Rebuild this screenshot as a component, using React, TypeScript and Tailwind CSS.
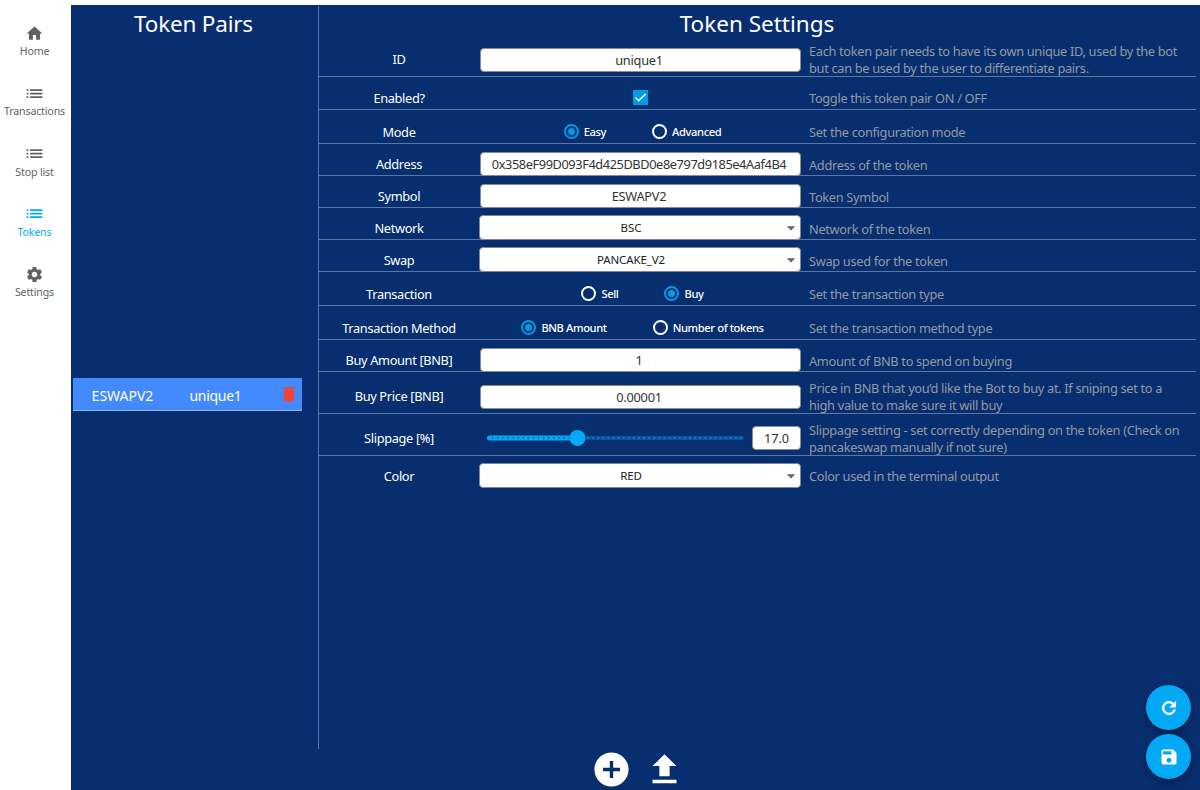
import { useState, type ReactNode } from 'react';
import { clsx } from 'clsx';
import { MdAddCircle, MdArrowDropDown, MdDelete, MdHome, MdList, MdSave, MdSettings, MdUpload } from 'react-icons/md';

const navItems = [
  { label: 'Home', icon: <MdHome size={19} /> },
  { label: 'Transactions', icon: <MdList size={21} /> },
  { label: 'Stop list', icon: <MdList size={21} /> },
  { label: 'Tokens', icon: <MdList size={21} /> },
  { label: 'Settings', icon: <MdSettings size={19} /> },
];

function TextField({ value, className }: { value: string; className?: string }) {
  return (
    <input
      defaultValue={value}
      className={clsx(
        'h-6 rounded-[4px] border border-[#8c8c8c] bg-white text-center text-[12.8px] text-[#333] outline-none',
        className ?? 'w-[321px] pr-[2px] tracking-[-0.25px]',
      )}
    />
  );
}

function SelectField({ value }: { value: string }) {
  return (
    <button className="flex h-[25px] w-[322px] items-center rounded-[4px] border border-[#7d8799] bg-white text-[11.5px] tracking-[-0.1px] text-[#222]">
      <span className="flex-1 pt-px pl-px text-center">{value}</span>
      <MdArrowDropDown size={20} className="-mr-px text-[#666]" />
    </button>
  );
}

function Radio({ label, checked, onClick }: { label: string; checked: boolean; onClick: () => void }) {
  return (
    <button
      onClick={onClick}
      className="flex items-center gap-[5px] text-[11.2px] font-medium tracking-[-0.4px] text-white"
    >
      <span
        className={clsx(
          'flex h-[15px] w-[15px] items-center justify-center rounded-full border-2',
          checked ? 'border-[#039be5]' : 'border-white',
        )}
      >
        {checked && <span className="h-[7px] w-[7px] rounded-full bg-[#039be5]" />}
      </span>
      <span className="pt-px">{label}</span>
    </button>
  );
}

function RadioGroup({ options, initial }: { options: string[]; initial: string }) {
  const [selected, setSelected] = useState(initial);

  return (
    <div className="flex gap-[46px] pl-[5px]">
      {options.map((option) => (
        <Radio key={option} label={option} checked={selected === option} onClick={() => setSelected(option)} />
      ))}
    </div>
  );
}

function Slider({ value }: { value: number }) {
  return (
    <svg width="258" height="16" viewBox="0 0 258 16">
      <rect x="0" y="6" width="257" height="4" rx="2" fill="#06539b" />
      <rect x="0" y="5.5" width="91" height="5" rx="2.5" fill="#03a9f4" />
      <path d="M5 8H88" stroke="#06437f" strokeWidth="1.4" strokeDasharray="1.4 3.7" />
      <path d="M100 8H257" stroke="#038bd0" strokeWidth="1.5" strokeDasharray="2 3.1" />
      <circle cx={value * 5.32} cy="8" r="8" fill="#03a9f4" />
    </svg>
  );
}

interface RowProps {
  label: string;
  help: string;
  height: string;
  offset?: string;
  textOffset?: string;
  last?: boolean;
  children: ReactNode;
}

function Row({ label, help, height, offset = 'pt-2', textOffset = 'pt-[11px]', last, children }: RowProps) {
  return (
    <div className={clsx('flex', height, !last && 'border-b border-[#5b76a3]')}>
      <div
        className={clsx(
          'flex w-[160px] shrink-0 items-center justify-center text-[12.8px] tracking-[-0.35px] text-white',
          textOffset,
        )}
      >
        {label}
      </div>
      <div className={clsx('flex w-[322px] shrink-0 items-center justify-center', offset)}>{children}</div>
      <div
        className={clsx(
          'flex flex-1 items-center pl-2 text-[12.8px] leading-[17px] tracking-[-0.32px] text-[#9499a0]',
          textOffset,
        )}
      >
        <span className="whitespace-pre">{help}</span>
      </div>
    </div>
  );
}

export default function App() {
  const [active, setActive] = useState('Tokens');

  return (
    <div className="flex h-[790px] w-[1200px] overflow-hidden bg-white font-['Noto_Sans','Open_Sans',sans-serif]">
      <nav className="flex w-[71px] shrink-0 flex-col pt-[11px]">
        {navItems.map(({ label, icon }) => (
          <button
            key={label}
            onClick={() => setActive(label)}
            className={clsx(
              'flex h-[60.3px] w-[69px] flex-col items-center pt-3 text-[10.6px] tracking-[-0.15px]',
              label === active ? 'text-[#03a9f4]' : 'text-[#616161]',
            )}
          >
            <span className="flex h-5 items-center">{icon}</span>
            <span className="pt-px leading-[15px]">{label}</span>
          </button>
        ))}
      </nav>

      <main className="relative mt-[5px] flex flex-1 flex-col bg-[#072e6f]">
        <div className="flex h-[745px] pt-px">
          <section className="flex w-[248px] shrink-0 flex-col border-r border-[#5b76a3]">
            <h1 className="h-[36px] pr-[2px] text-center text-[22.5px] leading-[36px] tracking-[-0.2px] text-white">
              Token Pairs
            </h1>
            <div className="mt-[336px] ml-[2px] flex h-[33px] w-[229px] items-center border-b border-[#8fb3f2] bg-[#448aff] text-[14px] text-white">
              <span className="w-[99px] pt-[2px] text-center">ESWAPV2</span>
              <span className="w-[87px] pt-[2px] text-center tracking-[-0.3px]">unique1</span>
              <MdDelete size={20} className="ml-5 text-[#f44336]" />
            </div>
          </section>

          <section className="w-[877px] shrink-0">
            <h1 className="h-[37px] pr-px text-center text-[22.5px] leading-[36px] text-white">Token Settings</h1>
            <Row
              label="ID"
              help={'Each token pair needs to have its own unique ID, used by the bot\nbut can be used by the user to differentiate pairs.'}
              height="h-[34px]"
              offset="pt-0"
              textOffset="pt-px"
            >
              <TextField value="unique1" />
            </Row>
            <Row label="Enabled?" help="Toggle this token pair ON / OFF" height="h-[33px]">
              <span className="flex h-[15px] w-[15px] items-center justify-center bg-[#039be5]">
                <svg width="13" height="11" viewBox="0 0 13 11" fill="none">
                  <path d="M1.5 5.5L4.8 8.7L11.5 2" stroke="white" strokeWidth="1.6" />
                </svg>
              </span>
            </Row>
            <Row
              label="Mode"
              help="Set the configuration mode"
              height="h-[34px]"
              offset="pt-[10px]"
              textOffset="pt-[12px]"
            >
              <RadioGroup options={['Easy', 'Advanced']} initial="Easy" />
            </Row>
            <Row label="Address" help="Address of the token" height="h-[32px]">
              <TextField
                value="0x358eF99D093F4d425DBD0e8e797d9185e4Aaf4B4"
                className="w-[321px] pr-[2px] tracking-[-0.42px]"
              />
            </Row>
            <Row label="Symbol" help="Token Symbol" height="h-[32px]">
              <TextField value="ESWAPV2" />
            </Row>
            <Row label="Network" help="Network of the token" height="h-[32px]">
              <SelectField value="BSC" />
            </Row>
            <Row label="Swap" help="Swap used for the token" height="h-[32px]">
              <SelectField value="PANCAKE_V2" />
            </Row>
            <Row
              label="Transaction"
              help="Set the transaction type"
              height="h-[34px]"
              offset="pt-[10px]"
              textOffset="pt-[12px]"
            >
              <RadioGroup options={['Sell', 'Buy']} initial="Buy" />
            </Row>
            <Row
              label="Transaction Method"
              help="Set the transaction method type"
              height="h-[34px]"
              offset="pt-[10px]"
              textOffset="pt-[12px]"
            >
              <RadioGroup options={['BNB Amount', 'Number of tokens']} initial="BNB Amount" />
            </Row>
            <Row label="Buy Amount [BNB]" help="Amount of BNB to spend on buying" height="h-[32px]">
              <TextField value="1" />
            </Row>
            <Row
              label="Buy Price [BNB]"
              help={'Price in BNB that you’d like the Bot to buy at. If sniping set to a\nhigh value to make sure it will buy'}
              height="h-[42px]"
              textOffset="pt-[9px]"
            >
              <TextField value="0.00001" />
            </Row>
            <Row
              label="Slippage [%]"
              help={'Slippage setting - set correctly depending on the token (Check on\npancakeswap manually if not sure)'}
              height="h-[42px]"
              offset="pt-[7px]"
              textOffset="pt-[9px]"
            >
              <div className="flex items-center gap-[7px] pl-[8px]">
                <Slider value={17} />
                <TextField value="17.0" className="w-[49px] tracking-[-0.1px]" />
              </div>
            </Row>
            <Row label="Color" help="Color used in the terminal output" height="h-[32px]" offset="pt-[7px]" textOffset="pt-[9px]" last>
              <SelectField value="RED" />
            </Row>
          </section>
        </div>

        <div className="flex flex-1 items-center justify-center gap-3 pl-[5px] text-white">
          <button>
            <MdAddCircle size={41} />
          </button>
          <button>
            <MdUpload size={41} />
          </button>
        </div>

        <div className="absolute right-[9px] bottom-[11px] flex flex-col gap-1 text-white">
          <button className="flex h-[45px] w-[45px] items-center justify-center rounded-full bg-[#03a9f4] shadow-[0_3px_8px_rgba(0,0,0,0.35)]">
            <svg width="20" height="20" viewBox="0 0 24 24" fill="currentColor" stroke="currentColor" strokeWidth="0.8">
              <path d="M17.65 6.35A7.958 7.958 0 0 0 12 4c-4.42 0-7.99 3.58-7.99 8s3.57 8 7.99 8c3.73 0 6.84-2.55 7.73-6h-2.08A5.99 5.99 0 0 1 12 18c-3.31 0-6-2.69-6-6s2.69-6 6-6c1.66 0 3.14.69 4.22 1.78L13 11h7V4l-2.35 2.35z" />
            </svg>
          </button>
          <button className="flex h-[45px] w-[45px] items-center justify-center rounded-full bg-[#03a9f4] shadow-[0_3px_8px_rgba(0,0,0,0.35)]">
            <MdSave size={20} />
          </button>
        </div>
      </main>
    </div>
  );
}
